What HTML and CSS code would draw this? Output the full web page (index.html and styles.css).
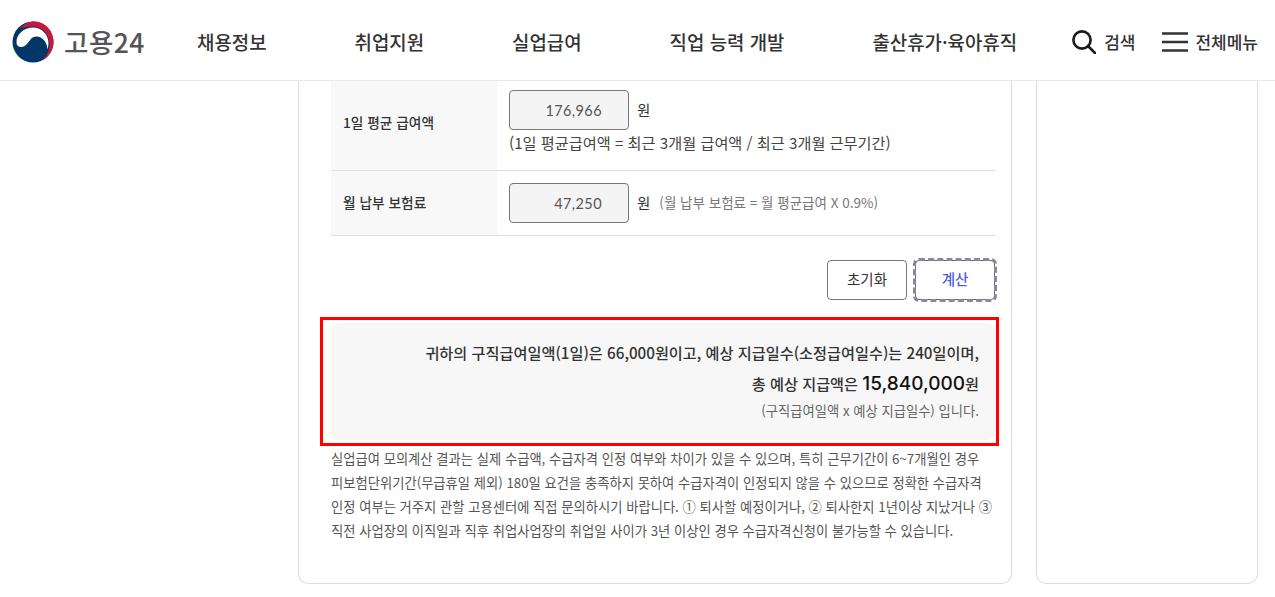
FILE: index.html
```html
<!DOCTYPE html>
<html lang="ko">
<head>
<meta charset="utf-8">
<title>고용24</title>
<link rel="stylesheet" href="styles.css">
</head>
<body>
<header class="header">
  <a class="logo">
    <svg class="emblem" width="44" height="42" viewBox="0 0 44 42">
      <circle cx="22" cy="21" r="20.500" fill="#003668"/>
      <path d="M9 7.500C13 3 18 .5 24 .6 34 1 42.500 10 42.500 21c0 8.500-5 15.800-12.500 19 5.500-3.500 8.500-10 8.500-17C38.500 13 31 5.500 22 5.500 17 5.500 13 6 9 7.500Z" fill="#cd1639"/>
      <path d="M5.500 22C5 13 13 6.500 22 6.500 31 6.500 38 14 37.500 23c-.1 2-.5 3.800-1 5.500C36 21 31.500 15.500 25.500 15.500 20 15.500 19 20 15.500 23.500 11.500 27.500 6 26.500 5.500 22Z" fill="#fff"/>
    </svg>
    <span class="logo-text">고용24</span>
  </a>
  <nav class="nav">
    <a class="nav-item">채용정보</a>
    <a class="nav-item">취업지원</a>
    <a class="nav-item">실업급여</a>
    <a class="nav-item">직업 능력 개발</a>
    <a class="nav-item">출산휴가·육아휴직</a>
  </nav>
  <div class="tools">
    <a class="tool tool-search">
      <svg width="24" height="24" viewBox="0 0 24 24" fill="none" stroke="#1a1a1a" stroke-width="2.600"><circle cx="10" cy="10" r="8.600"/><path d="M16 16l7 7" stroke-linecap="round"/></svg>
      <span>검색</span>
    </a>
    <a class="tool tool-menu">
      <svg width="26" height="20" viewBox="0 0 26 20" fill="none" stroke="#333" stroke-width="2.400"><path d="M0 1.500h26M0 10h26M0 18.500h26"/></svg>
      <span>전체메뉴</span>
    </a>
  </div>
</header>
<div class="page">
  <main class="card main-card">
    <div class="table">
      <div class="row row-tall">
        <div class="th">1일 평균 급여액</div>
        <div class="td">
          <div class="field"><span class="input">176,966</span><span class="unit">원</span></div>
          <p class="formula">(1일 평균급여액 = 최근 3개월 급여액 / 최근 3개월 근무기간)</p>
        </div>
      </div>
      <div class="row row-short">
        <div class="th">월 납부 보험료</div>
        <div class="td">
          <div class="field"><span class="input">47,250</span><span class="unit">원</span><span class="note">(월 납부 보험료 = 월 평균급여 X 0.9%)</span></div>
        </div>
      </div>
    </div>
    <div class="buttons">
      <button class="btn">초기화</button>
      <button class="btn btn-primary">계산</button>
    </div>
    <section class="result-wrap">
      <div class="result">
        <p class="result-line">귀하의 구직급여일액(1일)은 66,000원이고, 예상 지급일수(소정급여일수)는 240일이며,</p>
        <p class="result-line result-total">총 예상 지급액은 <strong>15,840,000</strong>원</p>
        <p class="result-sub">(구직급여일액 x 예상 지급일수) 입니다.</p>
      </div>
    </section>
    <p class="desc">실업급여 모의계산 결과는 실제 수급액, 수급자격 인정 여부와 차이가 있을 수 있으며, 특히 근무기간이 6~7개월인 경우<br>피보험단위기간(무급휴일 제외) 180일 요건을 충족하지 못하여 수급자격이 인정되지 않을 수 있으므로 정확한 수급자격<br>인정 여부는 거주지 관할 고용센터에 직접 문의하시기 바랍니다. ① 퇴사할 예정이거나, ② 퇴사한지 1년이상 지났거나 ③<br>직전 사업장의 이직일과 직후 취업사업장의 취업일 사이가 3년 이상인 경우 수급자격신청이 불가능할 수 있습니다.</p>
  </main>
  <aside class="card side-card"></aside>
</div>
</body>
</html>
```
FILE: styles.css
```css
* { box-sizing: border-box; }
html, body { margin: 0; padding: 0; }
body {
  height: 597px;
  overflow: hidden;
  background: #fff;
  color: #333;
  font-family: "Noto Sans CJK KR", "Noto Sans", sans-serif;
}
.header {
  height: 81px;
  display: flex;
  align-items: center;
  padding: 3px 17px 0 11px;
  border-bottom: 1px solid #e8e8e8;
}
.logo { display: flex; align-items: center; gap: 9px; width: 186px; flex: none; }
.emblem { display: block; }
.logo-text { font-size: 26.500px; font-weight: 500; color: #555; letter-spacing: 0.5px; }
.nav { display: flex; gap: 88px; }
.nav-item { font-size: 18.900px; font-weight: 500; color: #333; }
.tools { margin-left: auto; display: flex; align-items: center; gap: 27px; }
.tool { display: flex; align-items: center; gap: 8px; font-size: 17px; font-weight: 500; color: #333; }
.tool-menu { gap: 7px; }
.page { display: flex; gap: 24px; padding-left: 298px; padding-right: 17px; height: 503px; }
.card { border: 1px solid #ddd; border-top: 0; border-radius: 0 0 10px 10px; }
.main-card { width: 714px; padding: 0 16px 0 32px; }
.side-card { width: 222px; }
.table { border-bottom: 1px solid #ddd; }
.row { display: flex; }
.row-tall { height: 90px; border-bottom: 1px solid #ddd; }
.row-short { height: 64px; }
.th {
  width: 166px;
  flex: none;
  background: #f8f8f8;
  padding-left: 12px;
  display: flex;
  align-items: center;
  font-size: 13.700px;
  font-weight: 500;
  color: #333;
}
.row-tall .th { padding-bottom: 7px; }
.row-short .th { padding-bottom: 2px; }
.td { flex: 1; padding: 9px 0 0 12px; font-size: 14.500px; }
.row-short .td { padding-top: 12px; }
.field { display: flex; align-items: center; gap: 8px; height: 40px; }
.unit { margin-bottom: 2px; }
.input {
  width: 120px;
  height: 40px;
  display: flex;
  align-items: center;
  justify-content: flex-end;
  padding-right: 26px;
  background: #f4f4f4;
  border: 1px solid #777;
  border-radius: 4px;
  font-family: Lato, sans-serif;
  font-size: 14.500px;
  color: #555;
  letter-spacing: 0.4px;
}
.note { font-size: 13.500px; color: #777; margin-left: 1px; margin-bottom: 2px; }
.formula { margin: 1px 0 0; font-size: 15.200px; line-height: 22px; color: #444; }
.buttons { display: flex; justify-content: flex-end; gap: 8px; margin-top: 24px; }
.btn {
  width: 80px;
  height: 40px;
  background: #fff;
  border: 1px solid #767676;
  border-radius: 4px;
  font-family: inherit;
  font-size: 14.500px;
  color: #333;
  padding: 0 0 4px;
}
.btn-primary {
  color: #4a5fd8;
  font-weight: 500;
  border-color: #4a5fd8;
  outline: 3px dashed #8a8a8a;
  outline-offset: -1px;
}
.result-wrap {
  margin: 17px -4px 0 -11px;
  height: 129px;
  border: 3px solid #f00;
  padding: 3px 0 0 8px;
}
.result {
  width: 664px;
  height: 117px;
  background: #f7f7f7;
  border-radius: 8px;
  padding: 16px 16px 0 0;
  text-align: right;
}
.result-line { margin: 0; font-size: 15.200px; line-height: 26px; font-weight: 500; color: #333; }
.result-total { margin-top: 3px; line-height: 30px; }
.result-total strong { font-size: 19px; font-weight: 500; color: #111; font-family: Inter, "Noto Sans", sans-serif; }
.result-sub { margin: 2px 0 0; font-size: 13.300px; line-height: 20px; color: #666; }
.desc { margin: 1px 0 0; font-size: 13.300px; line-height: 24px; color: #555; white-space: nowrap; }
```
